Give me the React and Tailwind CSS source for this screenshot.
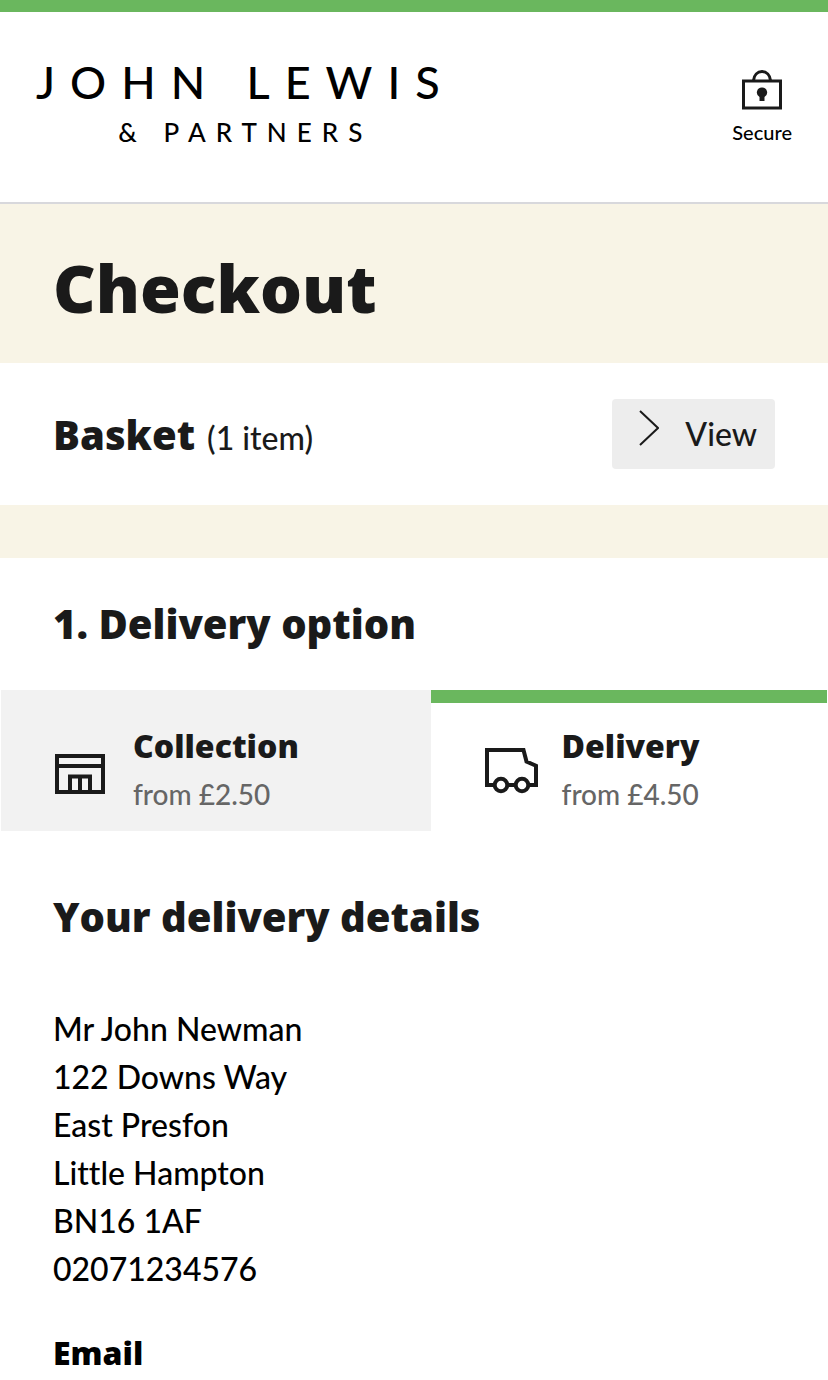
import React from 'react';

const address = [
  'Mr John Newman',
  '122 Downs Way',
  'East Presfon',
  'Little Hampton',
  'BN16 1AF',
  '02071234576',
];

function LockIcon() {
  return (
    <svg className="w-10 h-10" viewBox="0 0 40 40" fill="none" stroke="currentColor" strokeWidth="3" aria-hidden="true">
      <rect x="1.5" y="11" width="37" height="27" />
      <path d="M11.500 10.500C12 5 15.500 1.600 20 1.600S28 5 28.500 10.500" />
      <path d="M20 17.500a5 5 0 0 0-2.500 9.400V31h5v-4.100A5 5 0 0 0 20 17.500Z" fill="currentColor" stroke="none" />
    </svg>
  );
}

function ShopIcon() {
  return (
    <svg className="w-[50px] h-10 shrink-0" viewBox="0 0 50 40" fill="none" stroke="currentColor" strokeWidth="4" aria-hidden="true">
      <path d="M2 2h46v36H2zM2 12h46" />
      <path d="M15 38V22.500h20V38M25 22v16" />
    </svg>
  );
}

function VanIcon() {
  return (
    <svg className="w-[53px] h-[46px] shrink-0" viewBox="0 0 53 46" fill="none" stroke="currentColor" strokeWidth="4" aria-hidden="true">
      <path d="M9 37H2V2h36.500l3 11.500 9.500 4.300V37h-7M23 37h8" />
      <circle cx="16" cy="37" r="6.300" />
      <circle cx="37" cy="37" r="6.300" />
    </svg>
  );
}

export default function App() {
  return (
    <div className="min-h-screen bg-white text-[#1a1a1a] font-medium font-['Lato',sans-serif] [font-variant-ligatures:none]">
      {/* Header */}
      <header className="flex items-start justify-between border-t-[12px] border-t-[#6ab75e] border-b-2 border-b-[#d8d8dc] px-9 pt-[50px] pb-14">
        <a href="#" className="flex flex-col items-center text-black">
          <span className="text-[45px] leading-[40px] tracking-[15px] whitespace-nowrap">JOHN LEWIS</span>
          <span className="mt-4 text-[26px] leading-[28px] tracking-[10px] whitespace-nowrap">&amp; PARTNERS</span>
        </a>
        <div className="flex flex-col items-center pt-2">
          <LockIcon />
          <span className="mt-2 text-[20px] leading-[28px] text-black">Secure</span>
        </div>
      </header>

      {/* Title */}
      <div className="bg-[#f8f4e6] px-[53px] pt-[43px] pb-9">
        <h1 className="text-[66px] leading-[80px] font-extrabold font-['Open_Sans',sans-serif]">Checkout</h1>
      </div>

      {/* Basket */}
      <section className="flex items-center justify-between px-[53px] py-9">
        <h2 className="flex items-baseline gap-3 pt-1 leading-[56px]">
          <span className="text-[40px] font-extrabold font-['Open_Sans',sans-serif]">Basket</span>
          <span className="text-[32px]">(1 item)</span>
        </h2>
        <button type="button" className="flex items-center h-[70px] rounded bg-[#ededed] pl-[27px] pr-[18px] text-[32px]">
          <svg className="w-5 h-9 mb-3 mr-[26px]" viewBox="0 0 20 36" fill="none" stroke="currentColor" strokeWidth="2" aria-hidden="true">
            <path d="M1 1l18 17L1 35" />
          </svg>
          View
        </button>
      </section>

      <div className="h-[53px] bg-[#f8f4e6]" />

      {/* Delivery option */}
      <section>
        <h2 className="px-[53px] pt-[38px] pb-[38px] text-[40px] leading-[56px] font-extrabold font-['Open_Sans',sans-serif]">1. Delivery option</h2>
        <div className="flex px-px">
          <button type="button" className="flex w-[52%] items-start bg-[#f2f2f2] pl-[54px] pt-8 pb-[13px] text-left">
            <span className="pt-8"><ShopIcon /></span>
            <span className="ml-7 flex flex-col text-[32px] leading-[48px]">
              <span className="font-extrabold font-['Open_Sans',sans-serif]">Collection</span>
              <span className="text-[28px] text-[#666666]">from £2.50</span>
            </span>
          </button>
          <button type="button" className="flex w-[48%] items-start border-t-[13px] border-[#6ab75e] pl-[54px] pt-[19px] pb-[13px] text-left">
            <span className="pt-[26px]"><VanIcon /></span>
            <span className="ml-6 flex flex-col text-[32px] leading-[48px]">
              <span className="font-extrabold font-['Open_Sans',sans-serif]">Delivery</span>
              <span className="text-[28px] text-[#666666]">from £4.50</span>
            </span>
          </button>
        </div>
      </section>

      {/* Delivery details */}
      <section className="px-[53px] pt-[58px]">
        <h2 className="text-[40px] leading-[56px] font-extrabold font-['Open_Sans',sans-serif]">Your delivery details</h2>
        <address className="mt-[60px] text-[32px] leading-[48px] not-italic text-black">
          {address.map((line) => (
            <p key={line}>{line}</p>
          ))}
        </address>
        <h3 className="mt-[38px] text-[32px] leading-[44px] font-extrabold font-['Open_Sans',sans-serif] text-black">Email</h3>
      </section>
    </div>
  );
}
